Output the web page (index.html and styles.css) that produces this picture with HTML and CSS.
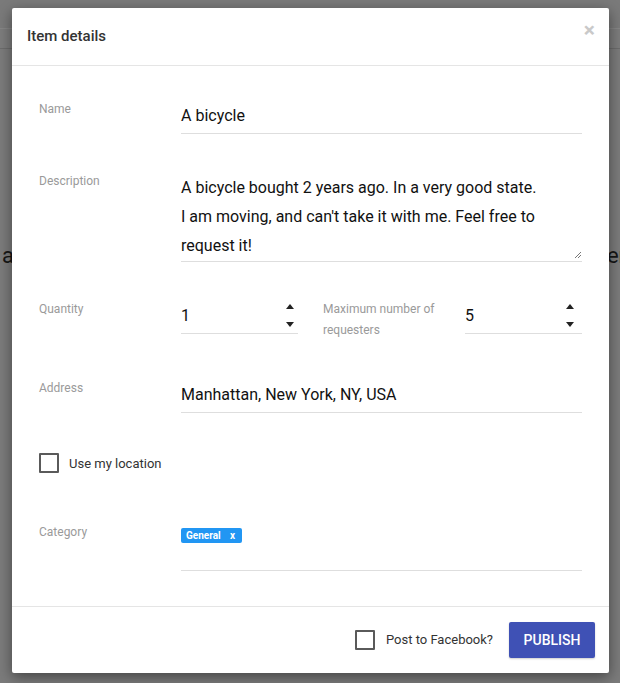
FILE: index.html
```html
<!DOCTYPE html>
<html lang="en">
<head>
<meta charset="utf-8">
<title>Item details</title>
<link rel="stylesheet" href="styles.css">
</head>
<body>
<div class="page">
  <div class="navbar"></div>
  <div class="subbar"></div>
  <div class="page-heading"><span>a</span><span>er</span></div>
</div>
<div class="modal">
  <div class="modal-header">
    <h4 class="modal-title">Item details</h4>
    <span class="close">×</span>
  </div>
  <div class="modal-body">
    <div class="row">
      <div class="label">Name</div>
      <div class="field"><span class="value">A bicycle</span></div>
    </div>
    <div class="row">
      <div class="label">Description</div>
      <div class="field textarea">
        <span class="value">A bicycle bought 2 years ago. In a very good state.<br>I am moving, and can't take it with me. Feel free to request it!</span>
        <svg class="resize" width="8" height="8" viewBox="0 0 8 8"><path d="M7 1 L1 7 M7 4 L4 7" stroke="#777" stroke-width="1"/></svg>
      </div>
    </div>
    <div class="row">
      <div class="label">Quantity</div>
      <div class="split">
        <div class="field number qty">
          <span class="value">1</span>
          <span class="spin"><i class="up"></i><i class="down"></i></span>
        </div>
        <div class="label label-max">Maximum number of requesters</div>
        <div class="field number max">
          <span class="value">5</span>
          <span class="spin"><i class="up"></i><i class="down"></i></span>
        </div>
      </div>
    </div>
    <div class="row">
      <div class="label">Address</div>
      <div class="field"><span class="value">Manhattan, New York, NY, USA</span></div>
    </div>
    <div class="check-row">
      <span class="box"></span><span class="check-text">Use my location</span>
    </div>
    <div class="row last">
      <div class="label">Category</div>
      <div class="tags"><span class="tag">General<span class="tag-x">x</span></span></div>
    </div>
  </div>
  <div class="modal-footer">
    <span class="box"></span><span class="check-text fb">Post to Facebook?</span>
    <button class="btn">PUBLISH</button>
  </div>
</div>
</body>
</html>
```

FILE: styles.css
```css
html, body {
  margin: 0;
  padding: 0;
}
body {
  width: 620px;
  height: 683px;
  overflow: hidden;
  background: #7b7b7b;
  font-family: Roboto, "Liberation Sans", Arial, sans-serif;
  position: relative;
}
.page {
  height: 683px;
}
.navbar {
  height: 28px;
  background: #7a7a7a;
  border-bottom: 1px solid #868686;
}
.subbar {
  height: 19px;
  background: #7c7c7c;
  border-bottom: 1px solid #6c6c6c;
}
.page-heading {
  display: flex;
  justify-content: space-between;
  margin-top: 194px;
  font-size: 22px;
  color: #161616;
  padding: 0 0 0 2px;
  margin-right: -6px;
}
.modal {
  position: absolute;
  left: 12px;
  top: 8px;
  width: 597px;
  height: 665px;
  background: #fff;
  border-radius: 2px;
  box-shadow: 0 4px 14px rgba(0, 0, 0, 0.45);
  display: flex;
  flex-direction: column;
}
.modal-header {
  height: 57px;
  border-bottom: 1px solid #e5e5e5;
  display: flex;
  align-items: center;
  justify-content: space-between;
  padding: 0 14px 0 15px;
}
.modal-title {
  margin: 0;
  font-size: 15px;
  font-weight: 500;
  color: #333;
  line-height: 17px;
}
.close {
  align-self: flex-start;
  margin-top: 12px;
  font-size: 21px;
  font-weight: 700;
  line-height: 1;
  color: #c9c9c9;
}
.modal-body {
  padding: 33px 27px 33px 27px;
  flex: 1;
}
.row {
  display: grid;
  grid-template-columns: 142px 401px;
  margin-bottom: 37px;
}
.row.last {
  margin-bottom: 0;
}
.label {
  font-size: 12px;
  line-height: 21px;
  color: #9a9a9a;
}
.field {
  padding: 2px 0 3px;
  border-bottom: 1px solid #dedede;
  font-size: 16px;
  line-height: 29px;
  color: #111;
  position: relative;
}
.field.textarea {
  padding-bottom: 1px;
}
.resize {
  position: absolute;
  right: 0;
  bottom: 2px;
}
.split {
  display: grid;
  grid-template-columns: 117px 117px 117px;
  column-gap: 25px;
  align-items: start;
}
.number {
  display: flex;
  justify-content: space-between;
}
.spin {
  display: flex;
  flex-direction: column;
  justify-content: space-between;
  padding: 3px 0 3px;
  margin-right: 4px;
}
.max .spin {
  margin-right: 8px;
}
.spin i {
  display: block;
  width: 0;
  height: 0;
  border-left: 4px solid transparent;
  border-right: 4px solid transparent;
}
.spin .up {
  border-bottom: 5px solid #222;
}
.spin .down {
  border-top: 5px solid #222;
}
.check-row {
  display: flex;
  align-items: center;
  padding: 3px 0 12px;
  margin-bottom: 37px;
}
.box {
  display: block;
  width: 20px;
  height: 20px;
  box-sizing: border-box;
  border: 2px solid #5a5a5a;
  border-radius: 1px;
  flex: none;
}
.check-text {
  margin-left: 10px;
  font-size: 13px;
  color: #333;
}
.check-text.fb {
  margin-left: 11px;
  margin-right: 16px;
}
.tags {
  display: flex;
  align-items: flex-start;
  height: 49px;
  box-sizing: border-box;
  padding-top: 6px;
  border-bottom: 1px solid #dedede;
}
.tag {
  display: flex;
  align-items: center;
  justify-content: space-between;
  height: 15px;
  width: 61px;
  box-sizing: border-box;
  padding: 0 7px 0 5px;
  background: #2196f3;
  border-radius: 2px;
  color: #fff;
  font-size: 10px;
  font-weight: 700;
}
.modal-footer {
  border-top: 1px solid #e5e5e5;
  height: 67px;
  box-sizing: border-box;
  padding: 15px 14px 16px;
  display: flex;
  align-items: center;
  justify-content: flex-end;
}
.btn {
  height: 36px;
  width: 86px;
  padding: 0;
  border: none;
  border-radius: 2px;
  background: #3f51b5;
  color: #fff;
  font-family: Roboto, "Liberation Sans", Arial, sans-serif;
  font-size: 14px;
  font-weight: 500;
  box-shadow: 0 1px 2px rgba(0, 0, 0, 0.2);
}
```
